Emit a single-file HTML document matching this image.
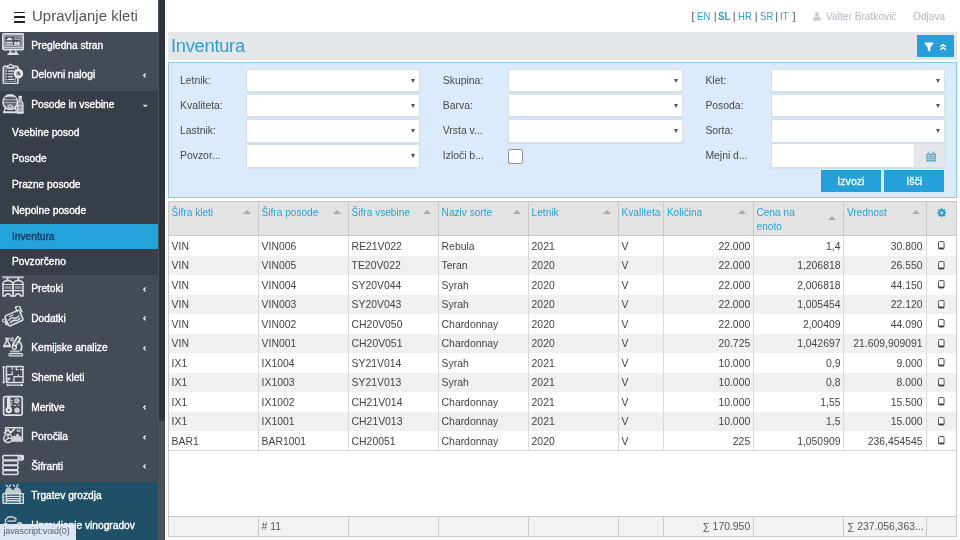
<!DOCTYPE html>
<html lang="sl">
<head>
<meta charset="utf-8">
<title>Upravljanje kleti - Inventura</title>
<style>
*{box-sizing:border-box;margin:0;padding:0}
html,body{width:960px;height:540px;overflow:hidden;background:#fff}
body{font-family:"Liberation Sans",sans-serif;font-size:10.4px;color:#333;position:relative}
a{text-decoration:none;color:inherit}
#side,#strip,#top,#tbar,#filt,#grid,#status{will-change:transform}
/* ---------- sidebar ---------- */
#side{position:absolute;left:0;top:0;width:158px;height:540px;background:#444b57;overflow:hidden}
#brand{height:31.6px;background:#fff;position:relative}
#brand .burger{position:absolute;left:13.6px;top:11.6px;width:11.5px;height:11px}
#brand .burger i{position:absolute;left:0;width:11.5px;height:1.9px;background:#222;border-radius:.5px}
#brand .ttl{position:absolute;left:32px;top:7.4px;font-size:14.9px;letter-spacing:.05px;color:#555;white-space:nowrap;line-height:18px}
.mi{height:29.6px;position:relative;color:#fff;background:#444b57;white-space:nowrap}
.mi .tx{position:absolute;left:31.2px;top:0;line-height:27.4px;font-size:10.2px;font-weight:normal;letter-spacing:0;-webkit-text-stroke:.35px #fff}
.mi svg.ic{position:absolute;left:2px;top:1px;width:22.2px;height:22.2px}
.mi .ch{position:absolute;left:143.2px;top:11.6px;width:3.2px;height:4.8px}
.mi.open{background:#373e47}
.mi.alt{background:#1f5067}
.sub{background:#373e47}
.si{height:25.8px;line-height:26px;padding-left:12px;color:#fff;font-size:10.2px;font-weight:normal;-webkit-text-stroke:.35px #fff;white-space:nowrap}
.si.act{background:#25a4dc;color:#0e3a5c;-webkit-text-stroke-color:#0e3a5c}
#strip{position:absolute;left:158px;top:0;width:6.6px;height:540px;background:#4a515d}
#strip i{position:absolute;left:.6px;top:0;width:6px;height:421px;background:#2e343c}
#status{position:absolute;left:0;top:524px;width:75.5px;height:16px;background:#dde6f7;border-top-right-radius:3px;color:#5a5f66;font-size:9px;line-height:15.5px;padding-left:3.4px;white-space:nowrap;letter-spacing:-.1px}
/* ---------- top bar ---------- */
#top{position:absolute;left:165px;top:0;right:0;height:32px;font-size:10.4px;white-space:nowrap}
#top span,#top a{position:absolute;top:9.8px;line-height:13px}
/* ---------- title ---------- */
#tbar{position:absolute;left:168px;top:32px;width:789px;height:27.6px;background:#e4e7ea}
#tbar h1{position:absolute;left:2.8px;top:2.2px;font-size:19.2px;font-weight:normal;color:#2f9fd2;line-height:24px;letter-spacing:-.3px;transform-origin:0 50%;transform:scaleX(.955)}
#fbtn{position:absolute;left:749px;top:2.5px;width:37.2px;height:22.2px;background:#25a0da}
/* ---------- filter ---------- */
#filt{position:absolute;left:168px;top:62px;width:789px;height:136.2px;background:#dcebfb;border:1px solid #8ecbe6}
.fl{position:absolute;font-size:10.4px;color:#484848;line-height:14px;white-space:nowrap;margin-top:.5px}
.fi{position:absolute;height:23.4px;margin-top:-.2px;background:#fff;border:1px solid #d6e0ea;border-radius:1.2px;box-shadow:0 1px 0 rgba(190,203,220,.45)}
.fi:after{content:"";position:absolute;right:4.6px;top:9px;border-left:2.6px solid transparent;border-right:2.6px solid transparent;border-top:4.2px solid #555}
.fi.nd:after{display:none}
.btn{position:absolute;height:21.8px;background:#25a0da;color:#fff;font-size:10.6px;text-align:center;line-height:23px;-webkit-text-stroke:.3px #fff}

#top .lg{color:#555;font-size:11px}
#top .ln{color:#2c9fd3;transform-origin:0 50%;display:inline-block;transform:scaleX(.87);margin-left:-.6px}
#top .gr{color:#b4b9be;font-size:11px;transform-origin:0 50%;transform:scaleX(.925)}
.cb{position:absolute;width:15px;height:15px;background:#fff;border:1px solid #8f8f8f;border-radius:2.2px}
.cal{position:absolute;right:0;top:0;width:29.8px;height:100%;background:#e4e7ea;border-left:1px solid #d3dde6}
.cal svg{position:absolute;left:10.4px;top:6.8px;width:10.4px;height:11px}
/* ---------- grid ---------- */
#grid{position:absolute;left:168px;top:201px;width:789px;height:336px;border:1px solid #c9c9c9;background:#fff;overflow:hidden}

#grid table{border-collapse:separate;border-spacing:0;table-layout:fixed;width:787px;font-size:10.4px}
#grid th,#grid td{overflow:hidden;white-space:nowrap;text-align:left;font-weight:normal;border-left:1px solid #c9c9c9;padding:0 0 0 2.6px}
#grid th:first-child,#grid td:first-child{border-left:0}
.gh th{height:34.4px;background:#e3e3e3;color:#2c9fd3;font-size:10.1px;vertical-align:top;padding-top:4.4px !important;line-height:13.2px;position:relative;white-space:normal !important;border-bottom:1px solid #c9c9c9}
.sa{position:absolute;right:6.8px;top:8.2px;border-left:4px solid transparent;border-right:4px solid transparent;border-bottom:4.6px solid #a9a9a9}
.gb td{height:19.5px;line-height:17.9px;color:#444;padding-top:1.6px !important;border-left-color:#dadada !important}
.gb tr.alt td{background:#f0f0f0}
#grid td.r{text-align:right;padding-right:2.8px}
#grid .c9{text-align:center;padding:0}
.gear{width:9.6px;height:9.6px;margin-top:1.2px}
.tb{width:6.6px;height:8.6px;vertical-align:middle;margin-top:-3px}
.fill{position:absolute;left:0;top:247.8px;width:787px;height:66px;background:#fff;border-top:1px solid #d5d5d5}
.gf{position:absolute;left:0;top:313.8px}
.gf td{height:20.4px;background:#f2f2f2;color:#555;border-top:1px solid #c9c9c9;line-height:19px}
#grid tr td:nth-child(9).r, #grid tr td:nth-child(9){padding-right:3.8px}
</style>
</head>
<body>
<div id="side">
  <div id="brand"><span class="burger"><i style="top:0"></i><i style="top:4.6px"></i><i style="top:9.2px"></i></span><span class="ttl">Upravljanje kleti</span></div>
  <div id="menu">
<a class="mi" href="#" style="display:block"><svg class="ic" viewBox="0 0 22.2 22.2" fill="none" stroke="#dde0e4" stroke-width="1.42" stroke-linecap="round" stroke-linejoin="round"><rect x=".8" y=".8" width="20.6" height="15.8" rx="1.4" stroke-width="1.7" fill="rgba(221,224,228,.3)"/><rect x="3.2" y="3" width="15.8" height="9.6" stroke-width="0.8" opacity=".8" fill="#3a404a"/><path d="M1 14.4H21.2" stroke-width="1.06" opacity=".8"/><path d="M4.4 7.2 Q4.2 5.6 5.8 5.6 Q6.4 4.2 8 4.8 Q9.6 4.4 9.8 5.8 Q10.8 6.2 10.4 7.2 Z" fill="#dde0e4" stroke="none"/><path d="M4.2 9.4H10.4M4.2 11.2H10.4" stroke-width="1.18"/><path d="M12.2 4.8H17.8M12.2 6.4H17.8" stroke-width="0.94" opacity=".8"/><path d="M12 11.8 V10 L13.6 8.2 L14.8 9.8 L16.4 7.8 L17.8 9.4 V11.8 Z" fill="#dde0e4" stroke="none"/><path d="M8.8 17 L7.6 20.4 H14.6 L13.4 17" stroke-width="1.53"/><path d="M6 21.2H16.2" stroke-width="1.53"/></svg><span class="tx">Pregledna stran</span></a>
<a class="mi" href="#" style="display:block"><svg class="ic" viewBox="0 0 22.2 22.2" fill="none" stroke="#dde0e4" stroke-width="1.42" stroke-linecap="round" stroke-linejoin="round"><g transform="translate(0 1.2)"><rect x="1.3" y="3.2" width="14.6" height="17.4" rx="1.6" stroke-width="1.65"/><rect x="3.6" y="5.4" width="10" height="13.2" stroke-width="0.83" opacity=".75"/><path d="M5.6 4.4 V3.2 Q5.6 2.4 6.6 2.4 H7.2 Q7.6 1 8.6 1 Q9.6 1 10 2.4 H10.6 Q11.6 2.4 11.6 3.2 V4.4 Z" fill="#444b57" stroke-width="1.30"/><path d="M6.6 7.8H11.4M6.6 10.6H10.6M6.6 13.4H10.6M6.6 16.2H12" stroke-width="1.30"/><path d="M4.6 7.8h.1M4.6 10.6h.1M4.6 13.4h.1M4.6 16.2h.1" stroke-width="1.42"/><circle cx="16.4" cy="10.5" r="3.7" fill="#aeb3bb" stroke="#eef0f2" stroke-width="2.1"/><path d="M16.4 8.8V10.8H17.9" stroke="#3c434e" stroke-width="1.2"/><path d="M15.6 5.7h1.6" stroke-width="1.3"/></g></svg><span class="tx">Delovni nalogi</span><svg class="ch" viewBox="0 0 4 6"><path d="M3.2 .6 L.9 3 L3.2 5.4" fill="none" stroke="#fff" stroke-width="1.5"/></svg></a>
<a class="mi open" href="#" style="display:block"><svg class="ic" viewBox="0 0 22.2 22.2" fill="none" stroke="#dde0e4" stroke-width="1.42" stroke-linecap="round" stroke-linejoin="round"><g transform="translate(0 .6)"><circle cx="8.2" cy="9.6" r="7.2" stroke-width="1.8" fill="rgba(221,224,228,.62)"/><path d="M2.4 5.6H14M1.4 8.4H15M1.8 11.4H14.6" stroke="#373e47" stroke-width="1.15" stroke-linecap="butt"/><path d="M2.6 12.6 Q8.2 19 13.8 12.6 Z" fill="#373e47" stroke="none" opacity=".8"/><path d="M5.6 13.8 L8.2 12.2 L10.8 13.8 L8.2 15.6 Z" stroke-width="1.2"/><path d="M3.2 15.8 L2.2 19 M13.2 15.8 L14.2 18" stroke-width="1.4"/><path d="M1.8 19.6H15" stroke-width="1.9"/><path d="M17.2 4.6 H19.2 V8.4 Q21 9.6 21 11.4 V20.4 H15.4 V11.4 Q15.4 9.6 17.2 8.4 Z" fill="#8d939b" stroke-width="1.3"/><path d="M16.6 12.8H19.8V17.2H16.6Z" stroke-width="0.9" opacity=".9"/><path d="M17 3.8h2.4" stroke-width="1.42"/><path d="M15.6 19.8H20.8" stroke-width="1.65"/></g></svg><span class="tx">Posode in vsebine</span><svg class="ch" viewBox="0 0 6 4" style="width:4.8px;height:3.2px;top:13px;left:142.6px"><path d="M.6 .8 L3 3.1 L5.4 .8" fill="none" stroke="#fff" stroke-width="1.5"/></svg></a>
<div class="sub"><a class="si" href="#" style="display:block">Vsebine posod</a><a class="si" href="#" style="display:block">Posode</a><a class="si" href="#" style="display:block">Prazne posode</a><a class="si" href="#" style="display:block">Nepolne posode</a><a class="si act" href="#" style="display:block">Inventura</a><a class="si" href="#" style="display:block">Povzorčeno</a></div>
<a class="mi" href="#" style="display:block"><svg class="ic" viewBox="0 0 22.2 22.2" fill="none" stroke="#dde0e4" stroke-width="1.42" stroke-linecap="round" stroke-linejoin="round"><g transform="translate(0 -.9)"><path d="M.4 1.2H21.8V3.2H.4Z" fill="#dde0e4" stroke="none" opacity=".8"/><path d="M5.6 3.4V5M16.4 3.4V5" stroke-width="1.89"/><path d="M1 21 V9 Q1 5.6 5.6 5.4 Q10.4 5.6 11 9 V21 H8.6 Q8.4 18.6 6 18.6 Q3.6 18.6 3.4 21 Z" stroke-width="1.53"/><path d="M11 21 V9 Q11.6 5.6 16.4 5.4 Q21 5.6 21 9 V21 H18.6 Q18.4 18.6 16 18.6 Q13.6 18.6 13.4 21 Z" stroke-width="1.53"/><path d="M1 9.4H21M1 15.6H21" stroke-width="1.18"/><path d="M2.6 11H9.4V14H2.6ZM12.6 11H19.4V14H12.6Z" fill="#dde0e4" stroke="none" opacity=".45"/></g></svg><span class="tx">Pretoki</span><svg class="ch" viewBox="0 0 4 6"><path d="M3.2 .6 L.9 3 L3.2 5.4" fill="none" stroke="#fff" stroke-width="1.5"/></svg></a>
<a class="mi" href="#" style="display:block"><svg class="ic" viewBox="0 0 22.2 22.2" fill="none" stroke="#dde0e4" stroke-width="1.42" stroke-linecap="round" stroke-linejoin="round"><g transform="rotate(-24 12 12)"><rect x="4.2" y="6.6" width="15.6" height="11" rx="1.4" stroke-width="1.5"/><path d="M17.6 6.6V3.6Q17.6 2.6 18.6 2.6H20.8Q21.8 2.6 21.8 3.6V9.8" stroke-width="1.5"/><path d="M6.4 11.8 Q9 9.8 11.8 11.8 T17.6 11.8" stroke-width="1.3"/><path d="M7 14.8 Q9.8 13 12.6 14.8 T17.4 14.8" stroke-width="1.3"/><path d="M8.6 8.8H12.4" stroke-width="1.1"/><path d="M6 12.6H18V16H6Z" fill="#dde0e4" stroke="none" opacity=".25"/></g><circle cx="2.2" cy="14.6" r="1.6" stroke-width="1.2"/><circle cx="4.8" cy="17.8" r="1.2" stroke-width="1.2" fill="#dde0e4"/></svg><span class="tx">Dodatki</span><svg class="ch" viewBox="0 0 4 6"><path d="M3.2 .6 L.9 3 L3.2 5.4" fill="none" stroke="#fff" stroke-width="1.5"/></svg></a>
<a class="mi" href="#" style="display:block"><svg class="ic" viewBox="0 0 22.2 22.2" fill="none" stroke="#dde0e4" stroke-width="1.42" stroke-linecap="round" stroke-linejoin="round"><path d="M3.6 3.4H6.6M4.3 3.8V6.6L1.5 11.6H8.7L5.9 6.6V3.8" stroke-width="1.45"/><path d="M2.8 10.4H7.4" stroke-width="1.2" opacity=".8"/><path d="M7.6 3 L9 4.6 L10.6 2.4 L11.6 4.8 L10 6.2 L8.6 5.4" stroke-width="1.05" opacity=".9"/><path d="M15.6 1.6 L18.6 3.4 L13.6 11.4 L10.6 9.6 Z" stroke-width="1.5" fill="rgba(221,224,228,.3)"/><path d="M17.2 6.4 Q21.4 9.8 18.8 15.4" stroke-width="1.7"/><circle cx="12.4" cy="12.2" r="2" stroke-width="1.3"/><path d="M8.4 15.4H17.6V17.4H8.4Z" fill="#dde0e4" stroke="none" opacity=".8"/><rect x="7" y="18.6" width="13.6" height="2.2" rx=".9" stroke-width="1.3"/></svg><span class="tx">Kemijske analize</span><svg class="ch" viewBox="0 0 4 6"><path d="M3.2 .6 L.9 3 L3.2 5.4" fill="none" stroke="#fff" stroke-width="1.5"/></svg></a>
<a class="mi" href="#" style="display:block"><svg class="ic" viewBox="0 0 22.2 22.2" fill="none" stroke="#dde0e4" stroke-width="1.42" stroke-linecap="round" stroke-linejoin="round"><rect x="4.4" y="1.4" width="16.6" height="16" stroke-width="1.53"/><path d="M1.6 2.2V17M6.2 20.2H19.4" stroke-width="1.30"/><path d="M1.6 2.2h.1M1.6 17.4h.1M5.6 20.2h.1M19.8 20.2h.1" stroke-width="2.24"/><path d="M10.2 1.6V4.4M10.2 6.8V9.6H4.6M14.2 1.6V4.6H16.2M18.4 4.6H20.8M12 11.6H20.8M12 11.6V17.2M16.4 11.6V9.8" stroke-width="1.30"/><path d="M5 16.4 L8 13.4 M5 13.4H8" stroke-width="1.06"/></svg><span class="tx">Sheme kleti</span></a>
<a class="mi" href="#" style="display:block"><svg class="ic" viewBox="0 0 22.2 22.2" fill="none" stroke="#dde0e4" stroke-width="1.42" stroke-linecap="round" stroke-linejoin="round"><rect x="1.6" y="1.6" width="18.6" height="18.6" rx="1.6" stroke-width="1.65"/><path d="M6.8 4V12.6" stroke-width="3.78" stroke="#dde0e4"/><circle cx="6.8" cy="15" r="3.3" fill="#dde0e4" stroke="none"/><circle cx="6.8" cy="15" r=".9" fill="#444b57" stroke="none"/><path d="M9.4 5.6h1M9.4 7.8h1M9.4 10h1" stroke-width="0.94"/><circle cx="14.8" cy="5.8" r="2" stroke-width="1.30"/><path d="M14.4 5.2L15.6 5.8L14.4 6.4Z" stroke-width="0.71"/><path d="M12 10.8 L12.8 9.8 L13.8 10.8 M15.6 9.8 L16.6 10.8 L17.6 9.8" stroke-width="0.94"/><circle cx="15" cy="15.2" r="2.7" fill="#dde0e4" stroke="none" opacity=".9"/></svg><span class="tx">Meritve</span><svg class="ch" viewBox="0 0 4 6"><path d="M3.2 .6 L.9 3 L3.2 5.4" fill="none" stroke="#fff" stroke-width="1.5"/></svg></a>
<a class="mi" href="#" style="display:block"><svg class="ic" viewBox="0 0 22.2 22.2" fill="none" stroke="#dde0e4" stroke-width="1.42" stroke-linecap="round" stroke-linejoin="round"><g transform="translate(0 1)"><path d="M3.6 7 V2.8H20.4V16H10" stroke-width="1.42"/><path d="M2.6 8.2 L5.8 4.6 L8.6 7.8 L12.2 4.2" stroke-width="1.77"/><path d="M14.6 4.4H18.6V7H14.6Z" fill="#dde0e4" stroke="none" opacity=".6"/><circle cx="6" cy="13.4" r="4.2" stroke-width="1.53"/><path d="M6 9.4V13.4H10M6 13.4L2.8 16" stroke-width="1.30"/><path d="M11.6 15.4V11.2H13.6V15.4M14.6 15.4V9.6H16.6V15.4M17.4 15.4V11.8H19.2V15.4" fill="#dde0e4" stroke-width="0.83"/></g></svg><span class="tx">Poročila</span><svg class="ch" viewBox="0 0 4 6"><path d="M3.2 .6 L.9 3 L3.2 5.4" fill="none" stroke="#fff" stroke-width="1.5"/></svg></a>
<a class="mi" href="#" style="display:block"><svg class="ic" viewBox="0 0 22.2 22.2" fill="none" stroke="#dde0e4" stroke-width="1.42" stroke-linecap="round" stroke-linejoin="round"><rect x=".8" y="1.6" width="20.6" height="4.4" rx="1.4" stroke-width="1.53"/><rect x=".8" y="6.8" width="15.2" height="4.2" rx="1.4" stroke-width="1.53"/><rect x=".8" y="11.6" width="15.2" height="4.2" rx="1.4" stroke-width="1.53"/><rect x=".8" y="16.4" width="15.2" height="4.2" rx="1.4" stroke-width="1.53"/><rect x="15.6" y="2" width="5.4" height="3.6" fill="#dde0e4" stroke="none"/><path d="M17.6 3.2 L19 4.4" stroke="#444b57" stroke-width="0.94"/></svg><span class="tx">Šifranti</span><svg class="ch" viewBox="0 0 4 6"><path d="M3.2 .6 L.9 3 L3.2 5.4" fill="none" stroke="#fff" stroke-width="1.5"/></svg></a>
<a class="mi alt" href="#" style="display:block"><svg class="ic" viewBox="0 0 22.2 22.2" fill="none" stroke="#dde0e4" stroke-width="1.42" stroke-linecap="round" stroke-linejoin="round"><path d="M4.2 2 L5.6 3.6 M8.4 1.8 L7.2 3.6 M11.2 2 L12.6 3.4 M16 1.6 L14.4 3.6" stroke-width="1.18"/><path d="M3 10.4 Q2.6 6 6.4 4 Q9.6 5.2 11.2 7.4 Q12.4 4.4 15.6 4 Q19.6 6 19.2 10.4 Z" fill="#dde0e4" stroke="none" opacity=".85"/><rect x="1" y="10.8" width="20.4" height="9.6" rx=".8" stroke-width="1.42"/><path d="M4.4 11V20.2M18 11V20.2" stroke-width="1.18"/><path d="M4.6 13.4H17.8M4.6 15.6H17.8M4.6 17.8H17.8" stroke-width="1.42"/><path d="M1.2 14h3M1.2 17h3M18.2 14h3M18.2 17h3" stroke-width="0.83"/></svg><span class="tx">Trgatev grozdja</span></a>
<a class="mi alt" href="#" style="display:block"><svg class="ic" viewBox="0 0 22.2 22.2" fill="none" stroke="#dde0e4" stroke-width="1.42" stroke-linecap="round" stroke-linejoin="round"><path d="M3.8 9 Q2.4 6.4 5 5.6 Q5.6 3.4 8.2 4.2 Q10 2.8 11.8 4.6 Q14.2 4.6 14 7 Q13 8.6 11 8.2 H6" stroke-width="1.30"/><circle cx="3.6" cy="12.2" r="1.7" stroke-width="1.30"/><circle cx="17.6" cy="12" r="2.2" stroke-width="1.42"/><path d="M17.6 14.2V20M3.6 14V20" stroke-width="1.30"/></svg><span class="tx">Upravljanje vinogradov</span></a>
</div>
</div>
<div id="strip"><i></i></div>
<div id="top">
<span class="lg" style="left:526.6px">[</span>
<a class="lg ln" href="#" style="left:532.8px">EN</a>
<span class="lg" style="left:548.7px">|</span>
<a class="lg ln" href="#" style="left:553.8px"><b>SL</b></a>
<span class="lg" style="left:567.7px">|</span>
<a class="lg ln" href="#" style="left:573.7px">HR</a>
<span class="lg" style="left:589.8px">|</span>
<a class="lg ln" href="#" style="left:595.8px">SR</a>
<span class="lg" style="left:610.2px">|</span>
<a class="lg ln" href="#" style="left:616.0px">IT</a>
<span class="lg" style="left:627.6px">]</span>
<svg class="usr" viewBox="0 0 8 9" style="position:absolute;left:647.8px;top:12.4px;width:7.8px;height:8.8px"><circle cx="4" cy="2.3" r="2.1" fill="#c8cbcf"/><path d="M0.2 9 V6.6 Q0.2 4.6 2.2 4.6 H5.8 Q7.8 4.6 7.8 6.6 V9 Z" fill="#c8cbcf"/></svg>
<a class="gr" href="#" style="left:661.4px">Valter Bratkovič</a>
<a class="gr" href="#" style="left:747.6px">Odjava</a>
</div>
<div id="tbar"><h1>Inventura</h1><div id="fbtn"><svg viewBox="0 0 37 22" width="37" height="22"><path d="M7.6 7.4 H16.4 V8.6 L13.3 12.4 V16.8 L10.7 15.4 V12.4 L7.6 8.6 Z" fill="#fff"/><path d="M23.2 11.9 L26 9.3 L28.8 11.9 M23.2 15 L26 12.4 L28.8 15" fill="none" stroke="#fff" stroke-width="1.25"/></svg></div></div>
<div id="filt">
<label class="fl" style="left:11.0px;top:10.2px">Letnik:</label>
<span class="fi" style="left:76.8px;top:6.0px;width:174.5px"></span>
<label class="fl" style="left:11.0px;top:35.4px">Kvaliteta:</label>
<span class="fi" style="left:76.8px;top:31.2px;width:174.5px"></span>
<label class="fl" style="left:11.0px;top:60.6px">Lastnik:</label>
<span class="fi" style="left:76.8px;top:56.4px;width:174.5px"></span>
<label class="fl" style="left:11.0px;top:85.6px">Povzor...</label>
<span class="fi" style="left:76.8px;top:81.4px;width:174.5px"></span>
<label class="fl" style="left:273.8px;top:10.2px">Skupina:</label>
<span class="fi" style="left:339.4px;top:6.0px;width:174.9px"></span>
<label class="fl" style="left:273.8px;top:35.4px">Barva:</label>
<span class="fi" style="left:339.4px;top:31.2px;width:174.9px"></span>
<label class="fl" style="left:273.8px;top:60.6px">Vrsta v...</label>
<span class="fi" style="left:339.4px;top:56.4px;width:174.9px"></span>
<label class="fl" style="left:273.8px;top:85.6px">Izloči b...</label>
<span class="cb" style="left:338.9px;top:85.7px"></span>
<label class="fl" style="left:536.4px;top:10.2px">Klet:</label>
<span class="fi" style="left:601.6px;top:6.0px;width:174.7px"></span>
<label class="fl" style="left:536.4px;top:35.4px">Posoda:</label>
<span class="fi" style="left:601.6px;top:31.2px;width:174.7px"></span>
<label class="fl" style="left:536.4px;top:60.6px">Sorta:</label>
<span class="fi" style="left:601.6px;top:56.4px;width:174.7px"></span>
<label class="fl" style="left:536.4px;top:85.6px">Mejni d...</label>
<span class="fi nd" style="left:601.6px;top:80.3px;width:174.7px;height:24.8px;border-radius:0"><span class="cal"><svg viewBox="0 0 10 10" width="10" height="10.4"><path d="M0.4 2.2 H9.6 V9.8 H0.4 Z" fill="#4d9dbb"/><path d="M2 .3 h1.5 v2.6 h-1.5 Z M6.5 .3 h1.5 v2.6 h-1.5 Z" fill="#4d9dbb" stroke="#e4e7ea" stroke-width=".5"/><path d="M0.4 4.3 H9.6 M0.4 6.1 H9.6 M0.4 7.9 H9.6 M2.7 3.4 V9.8 M5 3.4 V9.8 M7.3 3.4 V9.8" stroke="#e4e7ea" stroke-width=".5"/></svg></span></span>
<a class="btn" href="#" style="left:652.0px;top:107.0px;width:59.8px">Izvozi</a>
<a class="btn" href="#" style="left:715.4px;top:107.0px;width:59.6px">Išči</a>
</div>
<div id="grid">
<table class="gh"><colgroup><col style="width:89.0px"><col style="width:90.0px"><col style="width:90.0px"><col style="width:90.0px"><col style="width:90.0px"><col style="width:45.3px"><col style="width:89.7px"><col style="width:90.3px"><col style="width:83.1px"><col style="width:29.6px"></colgroup><thead><tr><th>Šifra kleti<i class="sa"></i></th><th>Šifra posode<i class="sa"></i></th><th>Šifra vsebine<i class="sa"></i></th><th>Naziv sorte<i class="sa"></i></th><th>Letnik<i class="sa"></i></th><th>Kvaliteta</th><th>Količina<i class="sa"></i></th><th>Cena na<br>enoto<i class="sa" style="top:14.2px"></i></th><th>Vrednost<i class="sa"></i></th><th class="c9"><svg class="gear" viewBox="0 0 10 10"><circle cx="5" cy="5" r="2.55" fill="none" stroke="#2c9fd3" stroke-width="2.3"/><g stroke="#2c9fd3" stroke-width="1.7"><path d="M5 .2V2M5 8V9.8M.2 5H2M8 5H9.8M1.6 1.6L2.9 2.9M7.1 7.1L8.4 8.4M8.4 1.6L7.1 2.9M1.6 8.4L2.9 7.1"/></g></svg></th></tr></thead></table>
<table class="gb"><colgroup><col style="width:89.0px"><col style="width:90.0px"><col style="width:90.0px"><col style="width:90.0px"><col style="width:90.0px"><col style="width:45.3px"><col style="width:89.7px"><col style="width:90.3px"><col style="width:83.1px"><col style="width:29.6px"></colgroup><tbody>
<tr><td>VIN</td><td>VIN006</td><td>RE21V022</td><td>Rebula</td><td>2021</td><td>V</td><td class="r">22.000</td><td class="r">1,4</td><td class="r">30.800</td><td class="c9"><svg class="tb" viewBox="0 0 7 9"><rect x=".55" y=".55" width="5.9" height="7.9" rx="1.1" fill="#fff" stroke="#3a3a3a" stroke-width=".9"/><path d="M.8 7.6H6.2" stroke="#222" stroke-width="1.3"/></svg></td></tr>
<tr class="alt"><td>VIN</td><td>VIN005</td><td>TE20V022</td><td>Teran</td><td>2020</td><td>V</td><td class="r">22.000</td><td class="r">1,206818</td><td class="r">26.550</td><td class="c9"><svg class="tb" viewBox="0 0 7 9"><rect x=".55" y=".55" width="5.9" height="7.9" rx="1.1" fill="#fff" stroke="#3a3a3a" stroke-width=".9"/><path d="M.8 7.6H6.2" stroke="#222" stroke-width="1.3"/></svg></td></tr>
<tr><td>VIN</td><td>VIN004</td><td>SY20V044</td><td>Syrah</td><td>2020</td><td>V</td><td class="r">22.000</td><td class="r">2,006818</td><td class="r">44.150</td><td class="c9"><svg class="tb" viewBox="0 0 7 9"><rect x=".55" y=".55" width="5.9" height="7.9" rx="1.1" fill="#fff" stroke="#3a3a3a" stroke-width=".9"/><path d="M.8 7.6H6.2" stroke="#222" stroke-width="1.3"/></svg></td></tr>
<tr class="alt"><td>VIN</td><td>VIN003</td><td>SY20V043</td><td>Syrah</td><td>2020</td><td>V</td><td class="r">22.000</td><td class="r">1,005454</td><td class="r">22.120</td><td class="c9"><svg class="tb" viewBox="0 0 7 9"><rect x=".55" y=".55" width="5.9" height="7.9" rx="1.1" fill="#fff" stroke="#3a3a3a" stroke-width=".9"/><path d="M.8 7.6H6.2" stroke="#222" stroke-width="1.3"/></svg></td></tr>
<tr><td>VIN</td><td>VIN002</td><td>CH20V050</td><td>Chardonnay</td><td>2020</td><td>V</td><td class="r">22.000</td><td class="r">2,00409</td><td class="r">44.090</td><td class="c9"><svg class="tb" viewBox="0 0 7 9"><rect x=".55" y=".55" width="5.9" height="7.9" rx="1.1" fill="#fff" stroke="#3a3a3a" stroke-width=".9"/><path d="M.8 7.6H6.2" stroke="#222" stroke-width="1.3"/></svg></td></tr>
<tr class="alt"><td>VIN</td><td>VIN001</td><td>CH20V051</td><td>Chardonnay</td><td>2020</td><td>V</td><td class="r">20.725</td><td class="r">1,042697</td><td class="r">21.609,909091</td><td class="c9"><svg class="tb" viewBox="0 0 7 9"><rect x=".55" y=".55" width="5.9" height="7.9" rx="1.1" fill="#fff" stroke="#3a3a3a" stroke-width=".9"/><path d="M.8 7.6H6.2" stroke="#222" stroke-width="1.3"/></svg></td></tr>
<tr><td>IX1</td><td>IX1004</td><td>SY21V014</td><td>Syrah</td><td>2021</td><td>V</td><td class="r">10.000</td><td class="r">0,9</td><td class="r">9.000</td><td class="c9"><svg class="tb" viewBox="0 0 7 9"><rect x=".55" y=".55" width="5.9" height="7.9" rx="1.1" fill="#fff" stroke="#3a3a3a" stroke-width=".9"/><path d="M.8 7.6H6.2" stroke="#222" stroke-width="1.3"/></svg></td></tr>
<tr class="alt"><td>IX1</td><td>IX1003</td><td>SY21V013</td><td>Syrah</td><td>2021</td><td>V</td><td class="r">10.000</td><td class="r">0,8</td><td class="r">8.000</td><td class="c9"><svg class="tb" viewBox="0 0 7 9"><rect x=".55" y=".55" width="5.9" height="7.9" rx="1.1" fill="#fff" stroke="#3a3a3a" stroke-width=".9"/><path d="M.8 7.6H6.2" stroke="#222" stroke-width="1.3"/></svg></td></tr>
<tr><td>IX1</td><td>IX1002</td><td>CH21V014</td><td>Chardonnay</td><td>2021</td><td>V</td><td class="r">10.000</td><td class="r">1,55</td><td class="r">15.500</td><td class="c9"><svg class="tb" viewBox="0 0 7 9"><rect x=".55" y=".55" width="5.9" height="7.9" rx="1.1" fill="#fff" stroke="#3a3a3a" stroke-width=".9"/><path d="M.8 7.6H6.2" stroke="#222" stroke-width="1.3"/></svg></td></tr>
<tr class="alt"><td>IX1</td><td>IX1001</td><td>CH21V013</td><td>Chardonnay</td><td>2021</td><td>V</td><td class="r">10.000</td><td class="r">1,5</td><td class="r">15.000</td><td class="c9"><svg class="tb" viewBox="0 0 7 9"><rect x=".55" y=".55" width="5.9" height="7.9" rx="1.1" fill="#fff" stroke="#3a3a3a" stroke-width=".9"/><path d="M.8 7.6H6.2" stroke="#222" stroke-width="1.3"/></svg></td></tr>
<tr><td>BAR1</td><td>BAR1001</td><td>CH20051</td><td>Chardonnay</td><td>2020</td><td>V</td><td class="r">225</td><td class="r">1,050909</td><td class="r">236,454545</td><td class="c9"><svg class="tb" viewBox="0 0 7 9"><rect x=".55" y=".55" width="5.9" height="7.9" rx="1.1" fill="#fff" stroke="#3a3a3a" stroke-width=".9"/><path d="M.8 7.6H6.2" stroke="#222" stroke-width="1.3"/></svg></td></tr>
</tbody></table>
<div class="fill"></div>
<table class="gf"><colgroup><col style="width:89.0px"><col style="width:90.0px"><col style="width:90.0px"><col style="width:90.0px"><col style="width:90.0px"><col style="width:45.3px"><col style="width:89.7px"><col style="width:90.3px"><col style="width:83.1px"><col style="width:29.6px"></colgroup><tfoot><tr><td></td><td># 11</td><td></td><td></td><td></td><td></td><td class="r">∑ 170.950</td><td></td><td>∑ 237.056,363...</td><td></td></tr></tfoot></table>
</div>
<div id="status">javascript:void(0)</div>
</body>
</html>
